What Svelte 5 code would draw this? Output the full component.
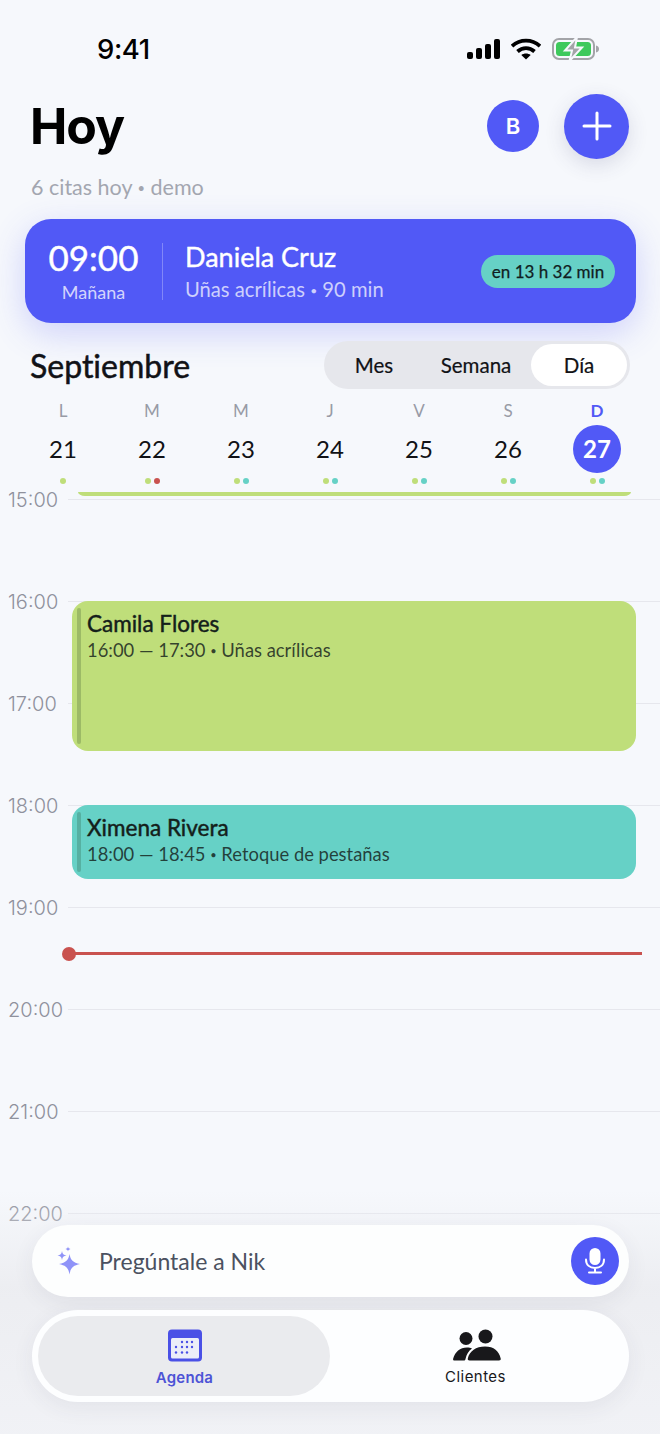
<script>
  const days = [
    { l: 'L', n: 21, dots: ['g'] },
    { l: 'M', n: 22, dots: ['g', 'r'] },
    { l: 'M', n: 23, dots: ['g', 't'] },
    { l: 'J', n: 24, dots: ['g', 't'] },
    { l: 'V', n: 25, dots: ['g', 't'] },
    { l: 'S', n: 26, dots: ['g', 't'] },
    { l: 'D', n: 27, dots: ['g', 't'], today: true }
  ];
  const hours = ['15:00', '16:00', '17:00', '18:00', '19:00', '20:00', '21:00', '22:00'];
</script>

<div class="phone">
  <div class="status">
    <span class="clock">9:41</span>
    <div class="status-icons">
      <svg width="34" height="22" viewBox="0 0 34 22"><rect x="1" y="14" width="6" height="7" rx="2"/><rect x="10" y="10" width="6" height="11" rx="2"/><rect x="19" y="6" width="6" height="15" rx="2"/><rect x="28" y="1" width="6" height="20" rx="2"/></svg>
      <svg width="30" height="22" viewBox="0 0 30 22" fill="none" stroke="#000" stroke-width="3.8"><path d="M1 8.200 C9 .8 21 .8 29 8.200"/><path d="M6.500 13.500 C11.500 9 18.500 9 23.500 13.500"/><path d="M15 21.500 L10.300 17 C13 15 17 15 19.700 17 Z" fill="#000" stroke="none"/></svg>
      <svg width="48" height="22" viewBox="0 0 48 22"><rect x="1" y="1" width="41" height="20" rx="6" fill="none" stroke="#a3a4a8" stroke-width="2"/><rect x="4" y="4" width="35" height="14" rx="3.500" fill="#3ec95c"/><path d="M44 7.500c2 .4 3 1.800 3 3.500s-1 3.100-3 3.500z" fill="#a3a4a8"/><path d="M25 -1 L13 12.500 H20 L17.500 23 L30 9.500 H23 Z" fill="#a3a4a8" stroke="#f6f8fc" stroke-width="2"/></svg>
    </div>
  </div>

  <header class="head">
    <h1>Hoy</h1>
    <div class="head-actions">
      <div class="avatar">B</div>
      <div class="add"><svg width="30" height="30" viewBox="0 0 30 30" stroke="#fff" stroke-width="3" stroke-linecap="round"><path d="M15 2v26M2 15h26"/></svg></div>
    </div>
  </header>
  <p class="sub">6 citas hoy <small>•</small> demo</p>

  <section class="next">
    <div class="next-time"><b>09:00</b><span>Mañana</span></div>
    <div class="next-info"><b>Daniela Cruz</b><span>Uñas acrílicas <small>•</small> 90 min</span></div>
    <div class="pill">en 13 h 32 min</div>
  </section>

  <div class="month-row">
    <h2>Septiembre</h2>
    <div class="seg">
      <span class="mes">Mes</span>
      <span class="sem">Semana</span>
      <span class="on">Día</span>
    </div>
  </div>

  <div class="week">
    {#each days as d}
      <div class="day" class:today={d.today}>
        <span class="wd">{d.l}</span>
        <span class="num">{d.n}</span>
        <span class="dots">{#each d.dots as c}<i class={c}></i>{/each}</span>
      </div>
    {/each}
  </div>

  <main class="timeline">
    {#each hours as h}
      <div class="hour"><span>{h}</span><em></em></div>
    {/each}

    <div class="ev-tail"></div>
    <div class="ev ev-a">
      <b>Camila Flores</b>
      <span>16:00 — 17:30 <small>•</small> Uñas acrílicas</span>
    </div>
    <div class="ev ev-b">
      <b>Ximena Rivera</b>
      <span>18:00 — 18:45 <small>•</small> Retoque de pestañas</span>
    </div>
    <div class="now"><i></i></div>
  </main>

  <div class="dock">
    <div class="ask">
      <svg class="spark" width="26" height="30" viewBox="0 0 26 30" fill="#8f93f8"><path d="M13.500 8 C14.500 14 17 16.500 24 18 C17 19.500 14.500 22 13.500 28.500 C12.500 22 10 19.500 3 18 C10 16.500 12.500 14 13.500 8Z"/><path d="M6 5 C6.500 8 7.500 9 10.500 9.500 C7.500 10 6.500 11 6 14 C5.500 11 4.500 10 1.500 9.500 C4.500 9 5.500 8 6 5Z"/><path d="M12 0.500 C12.300 2 12.800 2.500 14.500 3 C12.800 3.500 12.300 4 12 5.500 C11.700 4 11.200 3.500 9.500 3 C11.200 2.500 11.700 2 12 0.500Z"/></svg>
      <span>Pregúntale a Nik</span>
      <div class="mic"><svg width="22" height="26" viewBox="0 0 22 26" fill="none" stroke="#fff" stroke-width="2" stroke-linecap="round"><rect x="6.500" y="1" width="9" height="15" rx="4.500" fill="#fff"/><path d="M2 11.500c0 5.500 4 8.500 9 8.500s9-3 9-8.500M11 20v4.500M5 24.500h12"/></svg></div>
    </div>
    <nav class="tabs">
      <div class="tab active">
        <svg width="36" height="33" viewBox="0 0 36 33"><rect x="1" y="0.500" width="34" height="32" rx="4" fill="#4a50e6"/><rect x="4" y="9" width="28" height="20.500" rx="1.500" fill="#eceef8"/><g fill="#4a50e6"><circle cx="15" cy="13" r="1.200"/><circle cx="20" cy="13" r="1.200"/><circle cx="25" cy="13" r="1.200"/><circle cx="9" cy="18" r="1.200"/><circle cx="15" cy="18" r="1.200"/><circle cx="20" cy="18" r="1.200"/><circle cx="25" cy="18" r="1.200"/><circle cx="9" cy="23.500" r="1.200"/><circle cx="15" cy="23.500" r="1.200"/><circle cx="20" cy="23.500" r="1.200"/></g></svg>
        <span>Agenda</span>
      </div>
      <div class="tab second">
        <svg class="people" width="48" height="32" viewBox="0 0 48 32" fill="#18181b"><circle cx="13" cy="9.500" r="6.500"/><circle cx="32.500" cy="7.500" r="7"/><path d="M1 31.500c-1 0-1-1-.8-2C2 23 7 18.500 14 18.500c2 0 3.500.3 5 1-3.500 2.500-5.500 6-6.500 10.500-.2 1-.8 1.500-1.700 1.500z"/><path d="M16.500 31.500c-1.300 0-2-.9-1.700-2C16.500 22 23 17.500 32 17.500s14 4.500 15.700 12c.3 1.100-.4 2-1.700 2z"/></svg>
        <span>Clientes</span>
      </div>
    </nav>
  </div>
</div>

<style>
  :global(body) { margin: 0; background: #f6f8fc; }
  .phone {
    width: 660px; height: 1434px; position: relative; overflow: hidden;
    display: flex; flex-direction: column;
    background: #f6f8fc; color: #111216;
    font-family: Lato, "Liberation Sans", sans-serif;
    font-variant-ligatures: none;
  }
  small { font-size: .6em; vertical-align: .14em; }
  .status { height: 93px; flex: none; display: flex; justify-content: space-between; padding: 0 60px 0 97px; box-sizing: border-box; }
  .clock { font: 500 27.500px/1 Inter, sans-serif; color: #000; margin-top: 36px; letter-spacing: -.4px; }
  .status-icons { display: flex; align-items: flex-start; gap: 11px; margin-top: 38px; }
  .head { height: 66px; flex: none; display: flex; justify-content: space-between; align-items: center; padding: 0 31px 0 30px; }
  h1 { margin: 0; font: 700 50px/1 Inter, sans-serif; letter-spacing: -1px; color: #000; }
  .head-actions { display: flex; align-items: center; gap: 25px; }
  .avatar { width: 52px; height: 52px; border-radius: 50%; background: #5159f6; color: #fff; display: grid; place-items: center; font: 600 22px Inter, sans-serif; }
  .add { width: 65px; height: 65px; border-radius: 50%; background: #5159f6; display: grid; place-items: center; box-shadow: 0 6px 20px rgba(60, 60, 110, .16); }
  .sub { margin: 15px 0 0 31px; font-size: 21.500px; line-height: 26px; color: #a3a6b0; flex: none; }

  .next {
    flex: none; margin: 18px 24px 0 25px; height: 104px; box-sizing: border-box;
    background: #5159f6; border-radius: 26px; color: #fff;
    display: flex; align-items: center;
    box-shadow: 0 10px 34px rgba(81, 89, 246, .24);
  }
  .next-time { width: 138px; height: 57px; box-sizing: border-box; border-right: 1.500px solid rgba(255, 255, 255, .28); display: flex; flex-direction: column; align-items: center; }
  .next-time b { font-weight: 400; font-size: 35px; line-height: 33px; margin-top: -2px; -webkit-text-stroke: .4px #fff; }
  .next-time span { font-size: 18px; line-height: 24px; margin-top: 6px; color: rgba(255, 255, 255, .75); }
  .next-info { flex: 1; display: flex; flex-direction: column; padding: 4px 0 0 22px; }
  .next-info b { font-weight: 400; font-size: 27px; line-height: 30px; -webkit-text-stroke: .4px #fff; }
  .next-info span { font-size: 20.200px; line-height: 26px; margin-top: 4px; color: rgba(255, 255, 255, .72); }
  .pill { background: #66d1c6; color: #10201f; height: 33px; width: 134px; border-radius: 17px; margin-right: 21px; display: grid; place-items: center; font-size: 17px; -webkit-text-stroke: .25px #10201f; }

  .month-row { flex: none; display: flex; justify-content: space-between; align-items: center; margin-top: 18px; padding: 0 30px; }
  h2 { margin: 0; font-size: 32px; font-weight: 400; -webkit-text-stroke: .5px #111216; }
  .seg { width: 306px; height: 48px; box-sizing: border-box; background: #e6e7ec; border-radius: 24px; display: flex; align-items: center; font-size: 20.500px; padding: 3px; }
  .seg span { text-align: center; line-height: 42px; -webkit-text-stroke: .2px #111216; }
  .mes { width: 94px; }
  .sem { width: 110px; }
  .on { width: 96px; background: #fff; border-radius: 21px; }

  .week { flex: none; display: grid; grid-template-columns: repeat(7, 89px); padding-left: 18.500px; margin-top: 10px; height: 93px; }
  .day { display: flex; flex-direction: column; align-items: center; }
  .wd { font-size: 17px; line-height: 24px; color: #989ba6; }
  .num { font-size: 24px; width: 48px; height: 48px; line-height: 48px; text-align: center; border-radius: 50%; margin-top: 2px; }
  .dots { display: flex; gap: 3px; margin-top: 5px; }
  .dots i { width: 6px; height: 6px; border-radius: 50%; }
  i.g { background: #bfde7a; }
  i.t { background: #66d1c6; }
  i.r { background: #c9524f; }
  .today .wd { color: #5159f6; font-weight: 700; }
  .today .num { background: #5159f6; color: #fff; font-weight: 700; }

  .timeline { flex: 1; position: relative; }
  .hour { height: 102px; position: relative; }
  .hour span { position: absolute; left: 8px; top: 0; font: 300 20px/16px Inter, sans-serif; color: #8f919c; }
  .hour em { position: absolute; left: 68px; right: 0; top: 7px; height: 1px; background: #e6e7ed; }

  .ev-tail { position: absolute; left: 78px; right: 29px; top: 0; height: 4px; background: #bfde7a; border-radius: 0 0 7px 7px / 0 0 4px 4px; }
  .ev { position: absolute; left: 72px; right: 24px; border-radius: 16px; box-sizing: border-box; padding: 9px 0 0 15px; display: flex; flex-direction: column; color: #14201a; }
  .ev::before { content: ""; position: absolute; left: 5px; top: 7px; bottom: 7px; width: 4px; border-radius: 2px; background: rgba(30, 60, 30, .22); }
  .ev b { font-size: 22.500px; line-height: 28px; font-weight: 400; -webkit-text-stroke: .45px #14201a; }
  .ev span { font-size: 18.400px; line-height: 24px; color: rgba(20, 32, 26, .82); }
  .ev-a { top: 109px; height: 150px; background: #bfde7a; }
  .ev-b { top: 313px; height: 74px; background: #66d1c6; }
  .now { position: absolute; left: 69px; right: 18px; top: 460px; height: 3px; background: #c9524f; }
  .now i { position: absolute; left: -7px; top: -5.500px; width: 14px; height: 14px; border-radius: 50%; background: #c9524f; }

  .dock {
    position: absolute; left: 0; right: 0; bottom: 0; height: 244px; box-sizing: border-box; padding: 35px 31px 0 32px;
    background: linear-gradient(to bottom, rgba(236, 237, 241, 0), rgba(236, 237, 241, .95) 40%, rgba(240, 241, 245, .9) 100%);
    display: flex; flex-direction: column; gap: 13px;
  }
  .ask { height: 72px; background: #fdfefe; border-radius: 36px; display: flex; align-items: center; padding: 0 10px 0 24px; font-size: 23px; color: #4b5160; box-shadow: 0 6px 22px rgba(60, 60, 90, .07); }
  .spark { flex: none; }
  .ask span { flex: 1; margin-left: 17px; }
  .mic { width: 48px; height: 48px; border-radius: 50%; background: #5159f6; display: grid; place-items: center; }
  .tabs { height: 92px; background: #fdfeff; border-radius: 46px; display: flex; box-sizing: border-box; padding: 6px; box-shadow: 0 6px 22px rgba(60, 60, 90, .07); }
  .tab { flex: 1; display: flex; flex-direction: column; align-items: center; padding-top: 13px; box-sizing: border-box; border-radius: 40px; font: 400 15px/20px Inter, sans-serif; color: #18181b; letter-spacing: .45px; gap: 6px; }
  .tab.active { background: #eaebee; color: #4d53d6; font-weight: 600; letter-spacing: .2px; padding-left: 1px; }
  .tab.second { padding-right: 2px; }
  .people { margin-left: 2px; }
</style>
